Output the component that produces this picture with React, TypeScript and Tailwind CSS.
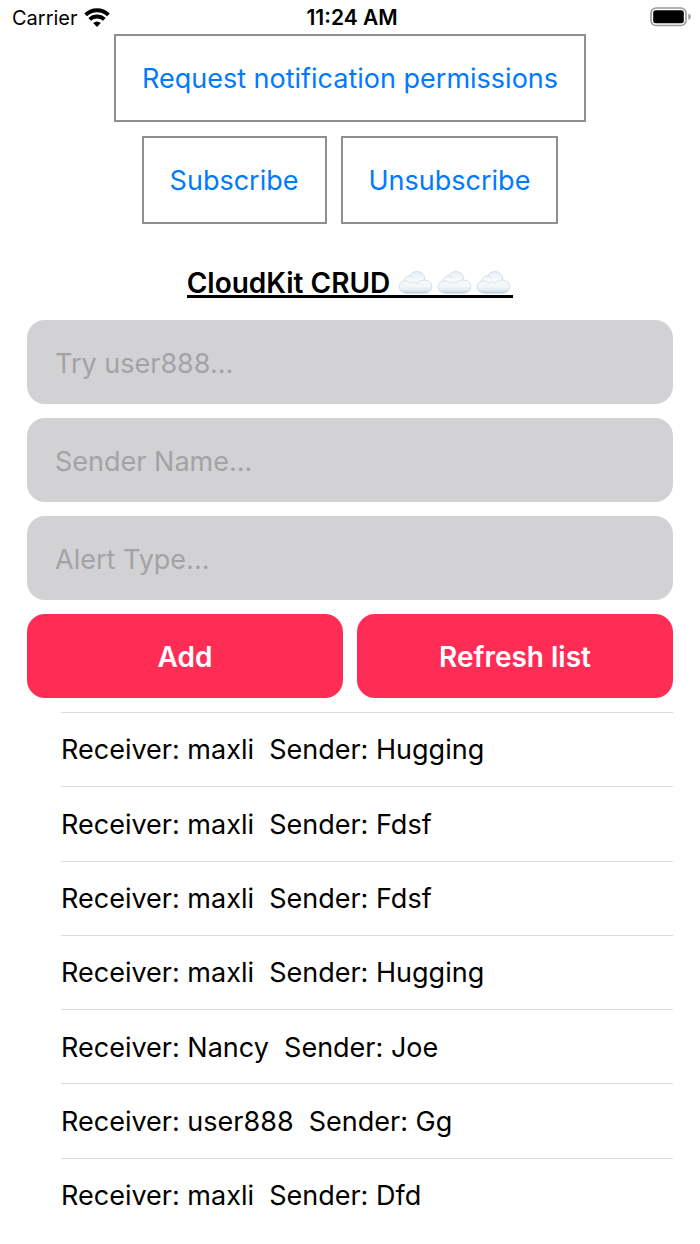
import { useState } from "react";

const messages = [
  { receiver: "maxli", sender: "Hugging" },
  { receiver: "maxli", sender: "Fdsf" },
  { receiver: "maxli", sender: "Fdsf" },
  { receiver: "maxli", sender: "Hugging" },
  { receiver: "Nancy", sender: "Joe" },
  { receiver: "user888", sender: "Gg" },
  { receiver: "maxli", sender: "Dfd" },
];

const outlineButton =
  "h-[88px] px-[26px] pt-0.5 border-2 border-[#8e8e93] text-[27px] text-[#007aff] whitespace-nowrap";
const fieldStyle =
  "block w-full h-[84px] px-7 pt-0.5 rounded-[18px] bg-[#d2d2d4] text-[27px] text-black placeholder:text-[#a3a3a5] placeholder:opacity-100 outline-none";
const fillButton =
  "flex-1 h-[84px] pt-0.5 rounded-[18px] bg-[#ff2d55] text-[28px] font-semibold text-white";

function WifiIcon() {
  return (
    <svg width="26" height="20" viewBox="0 0 26 20" aria-hidden="true">
      <g fill="none" stroke="#000" strokeWidth="3.9">
        <path d="M1.6 6.800a16.400 16.400 0 0 1 22.800 0" />
        <path d="M5.700 11.400a10.600 10.600 0 0 1 14.600 0" />
      </g>
      <path d="M13 19l-3.800-3.900a5.400 5.400 0 0 1 7.600 0z" />
    </svg>
  );
}

function BatteryIcon() {
  return (
    <svg width="42" height="20" viewBox="0 0 42 20" aria-hidden="true">
      <rect x="1" y="1" width="35" height="17.5" rx="5" fill="#fff" stroke="#999" strokeWidth="1.6" />
      <rect x="3.2" y="3.2" width="30.6" height="13" rx="2.5" />
      <path d="M38.400 6.600c1.800.8 2.400 1.900 2.400 3.200s-.6 2.400-2.400 3.200z" fill="#999" />
    </svg>
  );
}

function CloudIcon() {
  return (
    <svg width="35" height="24" viewBox="0 0 35 24" aria-hidden="true">
      <defs>
        <linearGradient id="cloud" x1="0" y1="0" x2="0" y2="1">
          <stop offset="0" stopColor="#e9eef3" />
          <stop offset="0.4" stopColor="#f8fafb" />
          <stop offset="0.7" stopColor="#f3f6f9" />
          <stop offset="0.88" stopColor="#dfe7ed" />
          <stop offset="1" stopColor="#b9c8d5" />
        </linearGradient>
      </defs>
      <path
        d="M9 22.200C4.200 22.200 1.200 19.600 1.200 15.800c0-2.900 2-5.200 5-5.800-.1-3 2.400-5.300 5.600-4.900C13 2 15.600.6 18.800.6c4.200 0 7.400 2.600 7.800 6.400.1.800.1 1.400 0 2.100 4.300.2 7.200 2.800 7.200 6.500 0 4-3 6.600-7.600 6.600z"
        fill="url(#cloud)"
        stroke="#cbd7e1"
        strokeWidth="0.8"
      />
      <path
        d="M6.200 10c2.600-.5 5 .3 6.300 2.100M11.800 5.100c1.600.1 2.900.8 3.600 1.900M12.500 12.100c2.200-1.700 5.600-1.400 7.200.5M19.700 11.600c1.600-1.900 4.300-2.800 6.900-2.500"
        fill="none"
        stroke="#d6e0e8"
        strokeWidth="0.9"
        strokeLinecap="round"
      />
    </svg>
  );
}

function StatusBar() {
  return (
    <header className="grid grid-cols-3 items-center h-[34px] pl-3 pr-2">
      <div className="flex items-center gap-1.5 pt-0.5 text-[20px]">
        Carrier
        <WifiIcon />
      </div>
      <div className="pt-0.5 text-center text-[21px] font-semibold">11:24 AM</div>
      <div className="flex justify-end">
        <BatteryIcon />
      </div>
    </header>
  );
}

export default function App() {
  const [receiver, setReceiver] = useState("");
  const [sender, setSender] = useState("");
  const [alertType, setAlertType] = useState("");

  return (
    <div className="flex flex-col min-h-screen bg-white text-black font-['Inter',sans-serif]">
      <StatusBar />

      <main className="flex flex-col flex-1">
        <div className="flex flex-col items-center gap-[14px]">
          <button type="button" className={outlineButton}>
            Request notification permissions
          </button>
          <div className="flex gap-[14px]">
            <button type="button" className={outlineButton}>
              Subscribe
            </button>
            <button type="button" className={outlineButton}>
              Unsubscribe
            </button>
          </div>
        </div>

        <div className="flex justify-center pt-10 pb-[22px]">
          <h1 className="flex items-end h-[34px] border-b-3 border-black text-[28px] leading-6 font-semibold">
            CloudKit CRUD
            <span className="flex gap-1 pl-2 pr-0.5">
              <CloudIcon />
              <CloudIcon />
              <CloudIcon />
            </span>
          </h1>
        </div>

        <form
          className="flex flex-col gap-[14px] px-[27px] pb-[14px]"
          onSubmit={(e) => e.preventDefault()}
        >
          <input
            aria-label="Receiver"
            placeholder="Try user888..."
            className={fieldStyle}
            value={receiver}
            onChange={(e) => setReceiver(e.target.value)}
          />
          <input
            aria-label="Sender name"
            placeholder="Sender Name..."
            className={fieldStyle}
            value={sender}
            onChange={(e) => setSender(e.target.value)}
          />
          <input
            aria-label="Alert type"
            placeholder="Alert Type..."
            className={fieldStyle}
            value={alertType}
            onChange={(e) => setAlertType(e.target.value)}
          />
          <div className="flex gap-[14px]">
            <button type="submit" className={fillButton}>
              Add
            </button>
            <button type="button" className={fillButton}>
              Refresh list
            </button>
          </div>
        </form>

        <ul className="flex flex-col flex-1 pl-[61px] pr-[27px] pb-3">
          {messages.map((m, i) => (
            <li
              key={i}
              className="flex flex-1 items-center pt-0.5 border-t border-[#dcdcde] text-[27px] whitespace-pre"
            >
              {`Receiver: ${m.receiver}  Sender: ${m.sender}`}
            </li>
          ))}
        </ul>
      </main>
    </div>
  );
}
